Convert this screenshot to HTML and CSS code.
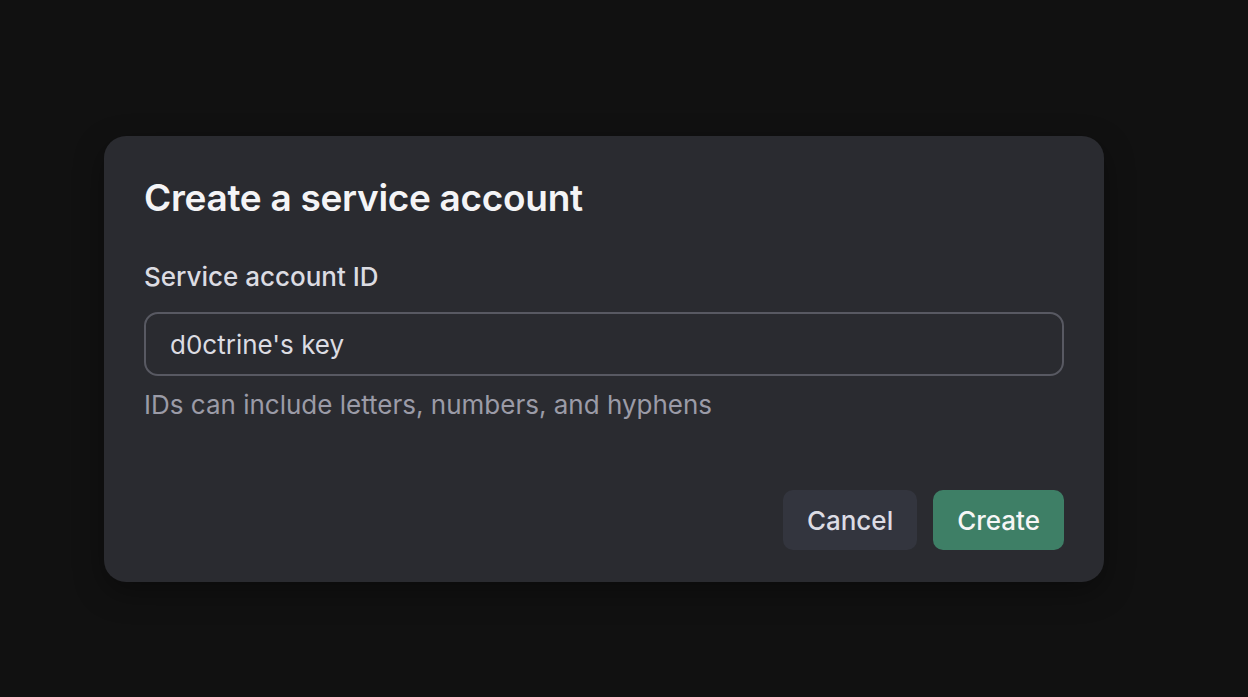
FILE: index.html
```html
<!DOCTYPE html>
<html lang="en">
<head>
    <meta charset="UTF-8">
    <title>Create a service account</title>
    <link rel="stylesheet" href="styles.css">
</head>
<body>
<div class="overlay">
    <div class="dialog">
        <h2 class="dialog-title">Create a service account</h2>
        <label class="field-label" for="sa-id">Service account ID</label>
        <input class="field-input" id="sa-id" type="text" value="d0ctrine's key">
        <p class="field-hint">IDs can include letters, numbers, and hyphens</p>
        <div class="dialog-actions">
            <button class="btn btn-cancel">Cancel</button>
            <button class="btn btn-create">Create</button>
        </div>
    </div>
</div>
</body>
</html>
```

FILE: styles.css
```css
*{margin: 0;padding: 0;box-sizing: border-box;}
html,body{height: 100%;}
body{background: #111111;font-family: Inter, "Noto Sans", sans-serif;color: #ececf1;}
.overlay{height: 100%;padding: 136px 0 0 104px;}
.dialog{width: 1000px;height: 446px;background: #2a2b30;border-radius: 22px;padding: 36px 40px 32px;display: flex;flex-direction: column;box-shadow: 0 10px 30px rgba(0,0,0,.35);}
.dialog-title{font-size: 37px;font-weight: 600;line-height: 52px;color: #f4f4f6;letter-spacing: -0.3px;}
.field-label{margin-top: 37px;font-size: 26px;font-weight: 500;line-height: 32px;color: #dcdce2;}
.field-input{margin-top: 19px;height: 64px;width: 100%;background: transparent;border: 2px solid #585962;border-radius: 14px;padding: 0 24px;font-family: inherit;font-size: 26px;color: #dcdce2;outline: none;}
.field-hint{margin-top: 11px;font-size: 26px;line-height: 36px;color: #9b9ba7;}
.dialog-actions{margin-top: auto;display: flex;justify-content: flex-end;gap: 16px;}
.btn{height: 60px;border: none;border-radius: 10px;padding: 0 24px;font-family: inherit;font-size: 26px;font-weight: 500;cursor: pointer;}
.btn-cancel{background: #33353e;color: #dcdce4;}
.btn-create{background: #3e7f66;color: #f6f6f6;}
```
